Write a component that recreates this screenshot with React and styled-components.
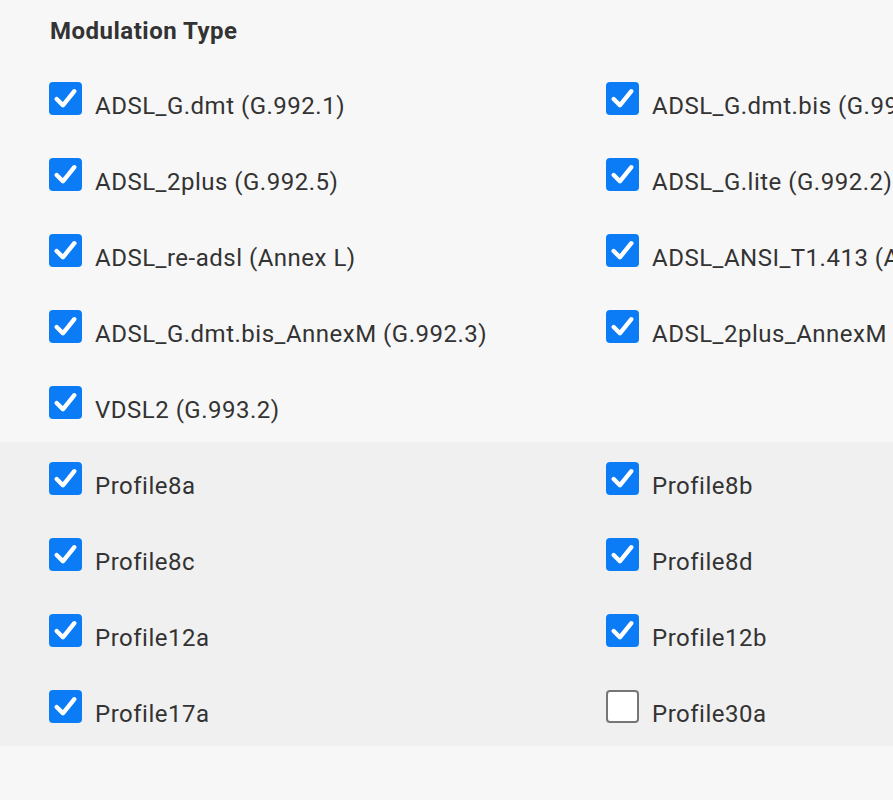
import styled, { createGlobalStyle } from "styled-components";

const GlobalStyle = createGlobalStyle`
    html, body {
        margin: 0;
        padding: 0;
        background: #f7f7f7;
        overflow: hidden;
    }
    body {
        font-family: Roboto, "Noto Sans", Arial, sans-serif;
        color: #333;
    }
`

const Page = styled.div`
    width: 893px;
    height: 800px;
    padding-top: 18px;
    box-sizing: border-box;
    background: #f7f7f7;
`

const Title = styled.h2`
    margin: 0 0 18px 50px;
    font-size: 24px;
    line-height: 26px;
    font-weight: 700;
    letter-spacing: 0.5px;
    color: #333;
`

const Section = styled.div`
    display: grid;
    grid-template-columns: 557px 557px;
    padding-left: 49px;
    background: ${p => (p.$shaded ? "#f0f0f0" : "transparent")};
`

const Row = styled.label`
    display: flex;
    align-items: flex-start;
    gap: 13px;
    height: 76px;
    padding-top: 20px;
    box-sizing: border-box;
    white-space: nowrap;
`

const Box = styled.span`
    flex: none;
    width: 33px;
    height: 33px;
    box-sizing: border-box;
    border-radius: 4px;
    display: flex;
    align-items: center;
    justify-content: center;
    background: ${p => (p.$checked ? "#0b7cf6" : "#fff")};
    border: ${p => (p.$checked ? "none" : "2px solid #767676")};
`

const Text = styled.span`
    margin-top: 10px;
    font-size: 24px;
    line-height: 28px;
    letter-spacing: 0.5px;
    color: #333;
`

const Check = () => (
    <svg width="25" height="25" viewBox="0 0 24 24">
        <polyline points="3.5,12.5 9.5,18.5 20.5,5" fill="none" stroke="#fff" strokeWidth="4.2" strokeLinecap="round" strokeLinejoin="round" />
    </svg>
)

const CheckItem = ({ label, checked = true }) => (
    <Row>
        <Box $checked={checked}>{checked && <Check />}</Box>
        <Text>{label}</Text>
    </Row>
)

const modes = [
    "ADSL_G.dmt (G.992.1)", "ADSL_G.dmt.bis (G.992.3)",
    "ADSL_2plus (G.992.5)", "ADSL_G.lite (G.992.2)",
    "ADSL_re-adsl (Annex L)", "ADSL_ANSI_T1.413 (Annex A)",
    "ADSL_G.dmt.bis_AnnexM (G.992.3)", "ADSL_2plus_AnnexM (G.992.5)",
    "VDSL2 (G.993.2)",
]

const profiles = [
    ["Profile8a", true], ["Profile8b", true],
    ["Profile8c", true], ["Profile8d", true],
    ["Profile12a", true], ["Profile12b", true],
    ["Profile17a", true], ["Profile30a", false],
]

const App = () => (
    <>
        <GlobalStyle />
        <Page>
            <Title>Modulation Type</Title>
            <Section>
                {modes.map(m => <CheckItem key={m} label={m} />)}
            </Section>
            <Section $shaded>
                {profiles.map(([p, on]) => <CheckItem key={p} label={p} checked={on} />)}
            </Section>
        </Page>
    </>
)

export default App
